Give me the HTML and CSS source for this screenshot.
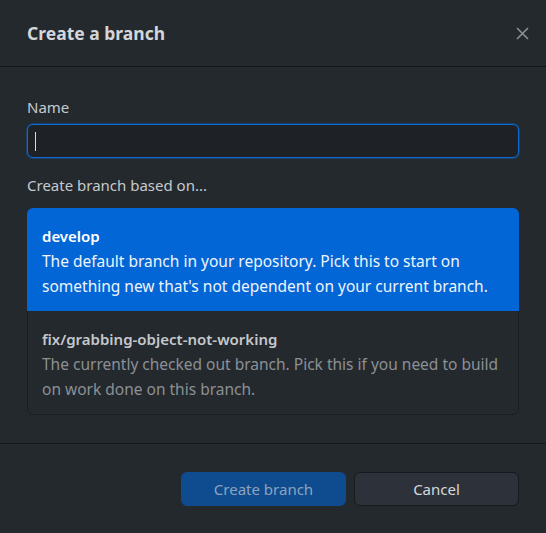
FILE: index.html
```html
<!DOCTYPE html>
<html>
<head>
<meta charset="utf-8">
<link rel="stylesheet" href="styles.css">
</head>
<body>
<div class="dialog">
  <header class="header">
    <h1 class="title">Create a branch</h1>
    <button class="close" aria-label="Close">
      <svg width="13" height="13" viewBox="0 0 13 13"><path d="M1 1L12 12M12 1L1 12" stroke="#8b9097" stroke-width="1.6" fill="none"/></svg>
    </button>
  </header>
  <div class="body">
    <div class="label">Name</div>
    <div class="input"><span class="caret"></span></div>
    <div class="label sub">Create branch based on...</div>
    <div class="list">
      <div class="item selected">
        <div class="item-title">develop</div>
        <div class="item-desc">The default branch in your repository. Pick this to start on<br>something new that's not dependent on your current branch.</div>
      </div>
      <div class="item">
        <div class="item-title">fix/grabbing-object-not-working</div>
        <div class="item-desc">The currently checked out branch. Pick this if you need to build<br>on work done on this branch.</div>
      </div>
    </div>
  </div>
  <footer class="footer">
    <button class="btn primary">Create branch</button>
    <button class="btn">Cancel</button>
  </footer>
</div>
</body>
</html>
```
FILE: styles.css
```css
html, body {
  margin: 0;
  padding: 0;
  background: #24292e;
}
body {
  font-family: "Noto Sans", "Open Sans", sans-serif;
  font-size: 15px;
  color: #c9cdd1;
}
.dialog {
  width: 546px;
  height: 533px;
  display: flex;
  flex-direction: column;
}
.header {
  height: 66px;
  border-bottom: 1px solid #141619;
  display: flex;
  align-items: center;
  justify-content: space-between;
  padding: 0 17px 0 27px;
  box-sizing: content-box;
}
.title {
  margin: 0;
  font-size: 17.5px;
  font-weight: 700;
  color: #d3d6da;
}
.close {
  background: none;
  border: 0;
  padding: 0;
  width: 13px;
  height: 13px;
  display: flex;
}
.body {
  padding: 30px 27px 28px;
  display: flex;
  flex-direction: column;
}
.label {
  line-height: 20px;
  color: #c6cacf;
}
.label.sub {
  margin-top: 17px;
}
.input {
  margin-top: 7px;
  height: 34px;
  box-sizing: border-box;
  border: 1px solid #0d6bd4;
  box-shadow: 0 0 0 1px rgba(3, 102, 214, 0.35);
  border-radius: 6px;
  background: #1e2227;
  display: flex;
  align-items: center;
  padding-left: 7px;
}
.caret {
  width: 1px;
  height: 19px;
  background: #d8dbde;
}
.list {
  margin-top: 13px;
  border: 1px solid #1a1d21;
  border-radius: 6px;
}
.item {
  padding: 16px 15px 12px 14px;
  line-height: 25px;
}
.item.selected {
  margin: -1px -1px 0;
  padding-left: 15px;
  background: #0366d6;
  border-radius: 6px 6px 0 0;
}
.item-title {
  font-weight: 600;
  color: #c4c8cc;
}
.item-desc {
  font-size: 15.5px;
  color: #8b9095;
  white-space: nowrap;
}
.selected .item-title {
  color: #ffffff;
}
.selected .item-desc {
  color: #eef4fc;
}
.footer {
  border-top: 1px solid #16191c;
  padding: 28px 27px 27px;
  display: flex;
  justify-content: flex-end;
  gap: 8px;
  margin-top: auto;
}
.btn {
  width: 165px;
  height: 34px;
  border-radius: 6px;
  font-family: inherit;
  font-size: 15px;
  border: 1px solid #16191d;
  background: #2d323a;
  color: #d6d9dc;
  padding: 0;
}
.btn.primary {
  background: #0f4c8f;
  border-color: #0f4c8f;
  color: #8ea3bd;
}
```
